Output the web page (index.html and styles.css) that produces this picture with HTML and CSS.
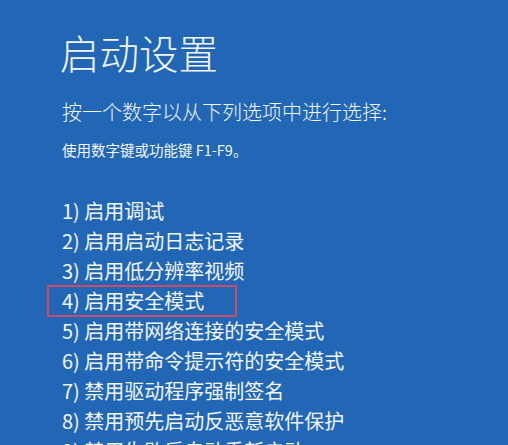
FILE: index.html
```html
<!DOCTYPE html>
<html lang="zh-CN">
<head>
<meta charset="utf-8">
<title>启动设置</title>
<link rel="stylesheet" href="styles.css">
</head>
<body>
<main class="screen">
  <h1 class="title">启动设置</h1>
  <p class="prompt">按一个数字以从下列选项中进行选择:</p>
  <p class="hint">使用数字键或功能键 F1-F9。</p>
  <ol class="options">
    <li>1) 启用调试</li>
    <li>2) 启用启动日志记录</li>
    <li>3) 启用低分辨率视频</li>
    <li class="selected">4) 启用安全模式</li>
    <li>5) 启用带网络连接的安全模式</li>
    <li>6) 启用带命令提示符的安全模式</li>
    <li>7) 禁用驱动程序强制签名</li>
    <li>8) 禁用预先启动反恶意软件保护</li>
    <li>9) 禁用失败后自动重新启动</li>
  </ol>
</main>
</body>
</html>
```
FILE: styles.css
```css
html, body {
  margin: 0;
  height: 100%;
  overflow: hidden;
}
body {
  background: #2267b5;
  color: #f3f6fb;
  font-family: "Noto Sans CJK SC", "Noto Sans", sans-serif;
}
.screen {
  padding: 28px 0 0 62px;
}
.title {
  margin: 0 0 0 -2px;
  font-size: 39.5px;
  line-height: 48px;
  font-weight: 300;
}
.prompt {
  margin: 22px 0 0;
  font-size: 20px;
  line-height: 28px;
  font-weight: 300;
}
.hint {
  margin: 14px 0 0;
  font-size: 14.5px;
  line-height: 20px;
  font-weight: 400;
}
.options {
  list-style: none;
  margin: 36px 0 0;
  padding: 0;
  font-size: 20px;
  line-height: 30px;
  font-weight: 400;
}
.options li {
  position: relative;
  white-space: nowrap;
}
.options .selected::before {
  content: "";
  position: absolute;
  left: -15px;
  top: -1px;
  width: 190px;
  height: 32px;
  box-sizing: border-box;
  border: 2px solid #cc4c68;
}
```
